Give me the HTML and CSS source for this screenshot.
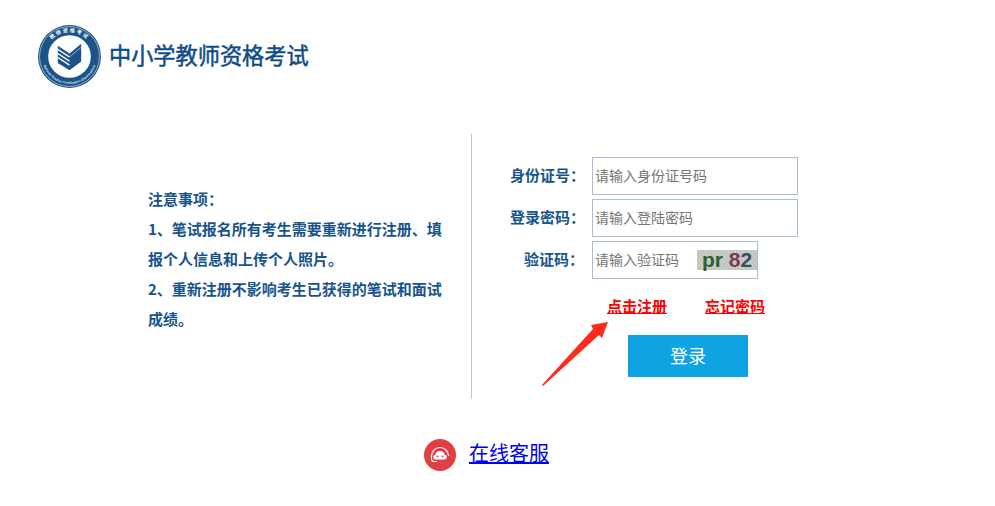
FILE: index.html
```html
<!DOCTYPE html>
<html lang="zh-CN">
<head>
<meta charset="utf-8">
<title>中小学教师资格考试</title>
<link rel="stylesheet" href="styles.css">
</head>
<body>
<header class="brand">
  <svg class="logo" viewBox="0 0 62 62" aria-hidden="true">
    <defs>
      <path id="arc-top" d="M7 31a24 24 0 0 1 48 0"/>
      <path id="arc-bottom" d="M4 31a27 27 0 0 0 54 0"/>
    </defs>
    <circle cx="31" cy="31" r="31" fill="#1c5389"/>
    <circle cx="31" cy="31" r="29.500" fill="none" stroke="#dfe8f1" stroke-width=".6"/>
    <circle cx="31" cy="31" r="21" fill="#fff"/>
    <text class="ring-cn"><textPath href="#arc-top" startOffset="50%" text-anchor="middle">教师资格考试</textPath></text>
    <text class="ring-en"><textPath href="#arc-bottom" startOffset="50%" text-anchor="middle">National Teacher Certification Examinations</textPath></text>
    <path d="M19.500 20.500 31 28 42.500 18.500V36L31 44.500 19.500 37.500Z" fill="#1c5389"/>
    <path d="M19.500 24 31 31.500M19.500 28 31 35.500M19.500 32 31 39.500" fill="none" stroke="#fff" stroke-width="1.300"/>
    <path d="M31 31.500 42.500 22" fill="none" stroke="#fff" stroke-width=".5"/>
  </svg>
  <h1 class="brand-title">中小学教师资格考试</h1>
</header>

<main class="login">
  <section class="notes">
    <p>注意事项：</p>
    <p>1、笔试报名所有考生需要重新进行注册、填报个人信息和上传个人照片。</p>
    <p>2、重新注册不影响考生已获得的笔试和面试成绩。</p>
  </section>

  <section class="panel">
    <form class="form">
      <label class="field-label" for="idno">身份证号：</label>
      <input class="field" id="idno" type="text" placeholder="请输入身份证号码">
      <label class="field-label" for="pwd">登录密码：</label>
      <input class="field" id="pwd" type="text" placeholder="请输入登陆密码">
      <label class="field-label" for="code">验证码：</label>
      <div class="captcha-field">
        <input class="captcha-input" id="code" type="text" placeholder="请输入验证码">
        <span class="captcha-img"><b class="c-g">pr</b> <b class="c-r">8</b><b class="c-b">2</b></span>
      </div>
    </form>
    <div class="links">
      <a href="#">点击注册</a>
      <a href="#">忘记密码</a>
    </div>
    <button class="submit" type="button">登录</button>
    <svg class="arrow" viewBox="0 0 67 64" aria-hidden="true">
      <path d="M0 63 51 7 49 3 66 0 60 16 57 13 1 64Z" fill="#ff2a1a"/>
    </svg>
  </section>
</main>

<footer class="service">
  <svg class="service-icon" viewBox="0 0 32 32" aria-hidden="true">
    <circle cx="16" cy="16" r="16" fill="#e04044"/>
    <path d="M7.500 17a8.500 8.500 0 0 1 17 0" fill="none" stroke="#fff" stroke-width="1.200"/>
    <path d="M11 20.500a2.400 2.400 0 0 1 .2-4.700 4.900 4.900 0 0 1 9.600 0 2.400 2.400 0 0 1 .2 4.700Z" fill="#fff"/>
    <circle cx="13.500" cy="17.500" r=".9" fill="#e04044"/>
    <circle cx="18.500" cy="17.500" r=".9" fill="#e04044"/>
    <path d="M7.500 17v3q0 2.500 3 2.500h2.500" fill="none" stroke="#fff" stroke-width="1.200"/>
  </svg>
  <a class="service-link" href="#">在线客服</a>
</footer>
</body>
</html>
```
FILE: styles.css
```css
* { box-sizing: border-box; }
html, body { margin: 0; height: 506px; overflow: hidden; }
body {
  background: #fff;
  font-family: "Noto Sans CJK SC", "Liberation Sans", sans-serif;
}
.brand {
  display: flex;
  align-items: flex-start;
  gap: 8px;
  padding: 25px 0 0 38px;
  height: 134px;
}
.logo { width: 63px; height: 63px; flex: none; }
.ring-cn { font-size: 5px; font-weight: 700; fill: #fff; letter-spacing: 1.500px; }
.ring-en { font-size: 3.200px; font-weight: 700; fill: #dfe8f1; font-family: "Liberation Sans", sans-serif; }
.brand-title {
  margin: 11px 0 0;
  font-size: 22.200px;
  line-height: 36px;
  font-weight: 400;
  -webkit-text-stroke: .5px #0f4c86;
  color: #0f4c86;
  white-space: nowrap;
}
.login { display: flex; height: 265px; }
.notes {
  width: 339px;
  margin-left: 133px;
  padding: 50px 29px 0 15px;
  border-right: 1px solid #c6c6c6;
  font-size: 15px;
  line-height: 30px;
  font-weight: 700;
  color: #17548c;
}
.notes p { margin: 0; }
.panel { position: relative; flex: 1; padding: 23px 0 0 38px; }
.form {
  display: grid;
  grid-template-columns: 74px auto;
  justify-content: start;
  align-items: center;
  column-gap: 8px;
  row-gap: 4px;
}
.field-label {
  padding-bottom: 3px;
  text-align: right;
  font-size: 15px;
  font-weight: 700;
  color: #17548c;
  white-space: nowrap;
}
.field, .captcha-field {
  height: 38px;
  border: 1px solid #a9bdd3;
  font: 14px "Noto Sans CJK SC", sans-serif;
}
.field { width: 206px; padding: 0 2px 2px; outline: none; }
.captcha-field { display: flex; align-items: center; width: 166px; }
.captcha-input {
  width: 104px;
  height: 36px;
  border: 0;
  padding: 0 2px 2px;
  outline: none;
  font: inherit;
  flex: none;
}
.captcha-img {
  width: 60px;
  height: 20px;
  flex: none;
  padding-left: 5px;
  background: repeating-linear-gradient(63deg, #cfd2cd 0 1px, #bfc3be 1px 3px);
  font: 700 21px/20px "Liberation Sans", sans-serif;
  white-space: pre;
}
.c-g { color: #2c6130; }
.c-r { color: #7c3a50; }
.c-b { color: #3d4a68; }
.field::placeholder, .captcha-input::placeholder { color: #757575; opacity: 1; }
.links {
  display: flex;
  gap: 38px;
  margin: 17px 0 0 97px;
  font-size: 15px;
  line-height: 20px;
  font-weight: 700;
}
.links a { color: #f00; }
.submit {
  display: block;
  width: 120px;
  height: 42px;
  margin: 19px 0 0 118px;
  padding: 0 0 2px;
  border: 0;
  background: #0fa3e3;
  color: #fff;
  font: 18px "Noto Sans CJK SC", sans-serif;
}
.arrow {
  position: absolute;
  left: 70px;
  top: 188px;
  width: 67px;
  height: 64px;
}
.service {
  display: flex;
  align-items: center;
  gap: 13px;
  margin: 40px 0 0 424px;
}
.service-icon { width: 32px; height: 32px; flex: none; }
.service-link { margin-bottom: 4px; color: #00e; font-size: 20px; line-height: 28px; }
```
